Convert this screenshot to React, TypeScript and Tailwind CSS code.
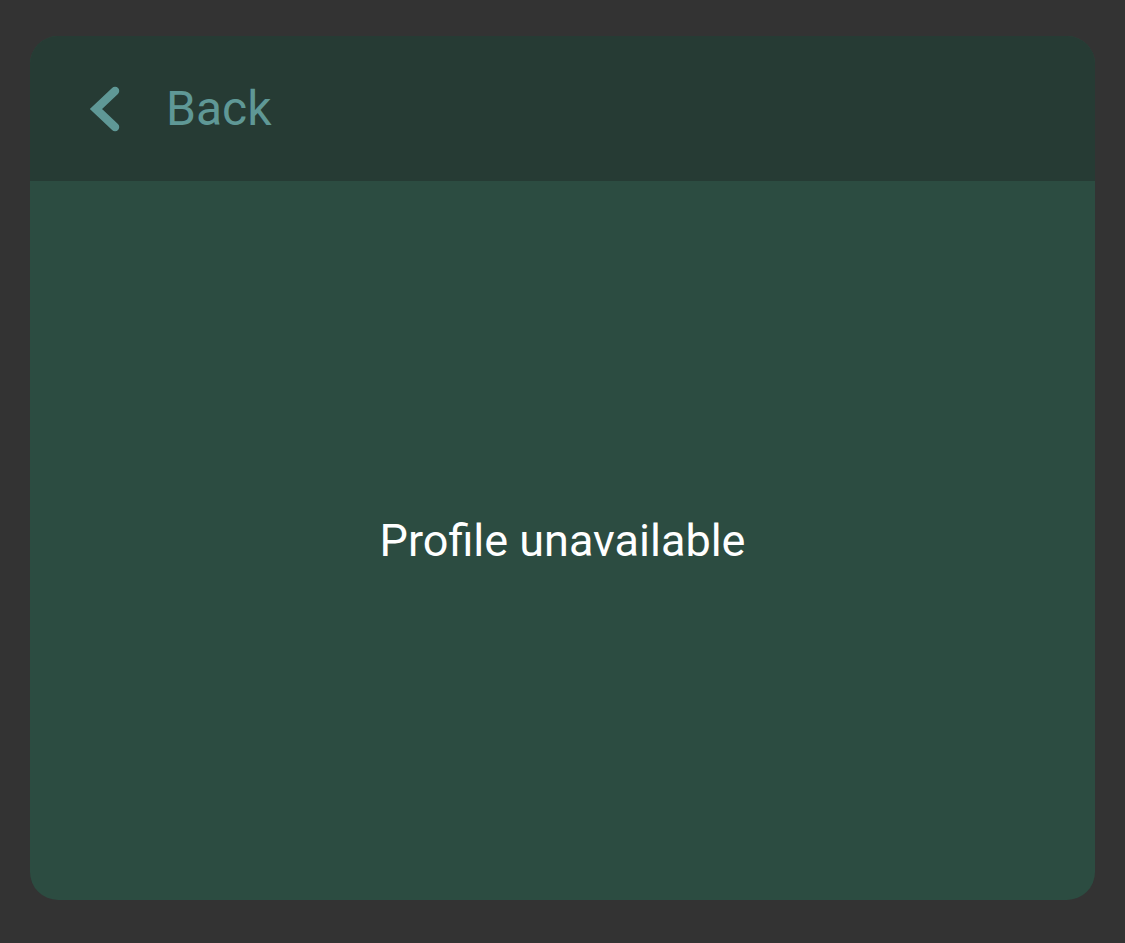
export default function App() {
  return (
    <div className="min-h-screen w-full bg-[#333333] px-[30px] pt-[36px] pb-[43px] flex" style={{ fontFamily: 'Roboto, "Noto Sans", sans-serif' }}>
      <div className="flex-1 flex flex-col rounded-[28px] overflow-hidden bg-[#2c4c41]">
        <div className="h-[145px] shrink-0 bg-[#263b34] flex items-center pl-[58px]">
          <button className="flex items-center gap-[42px] text-[#5f9896]">
            <svg width="36" height="48" viewBox="0 0 36 48" fill="none">
              <path d="M27 6 L8 24 L27 42" stroke="currentColor" strokeWidth="8.5" strokeLinecap="round" strokeLinejoin="miter" />
            </svg>
            <span className="text-[48px] leading-none">Back</span>
          </button>
        </div>
        <div className="flex-1 flex items-center justify-center">
          <p className="text-[45px] text-white leading-none">Profile unavailable</p>
        </div>
      </div>
    </div>
  );
}
